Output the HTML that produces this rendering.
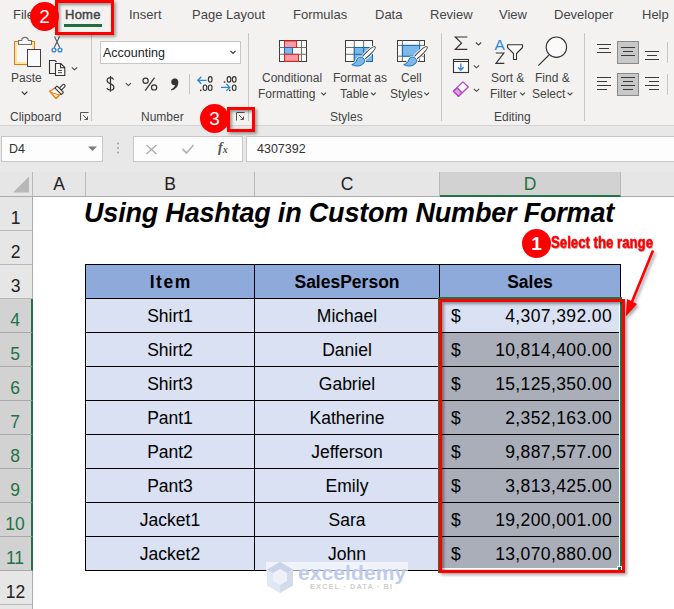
<!DOCTYPE html>
<html><head><meta charset="utf-8">
<style>
*{margin:0;padding:0;box-sizing:border-box}
html,body{width:674px;height:609px;overflow:hidden;background:#fff;font-family:"Liberation Sans",sans-serif}
.a{position:absolute;white-space:nowrap}
#ribbon{position:absolute;left:0;top:0;width:674px;height:126px;background:#f3f2f1;border-bottom:1px solid #d4d4d4}
.tab{position:absolute;top:7px;font-size:13px;color:#444;line-height:15px}
.lbl{position:absolute;font-size:12px;color:#444;line-height:14px}
.sep{position:absolute;width:1px;background:#c8c6c4}
#fbar{position:absolute;left:0;top:126px;width:674px;height:46px;background:#e8e8e8}
.box{position:absolute;top:10px;height:26px;background:#fdfdfd;border:1px solid #c6c6c6}
#colhdr{position:absolute;left:0;top:172px;width:674px;height:25px;background:#e6e6e6;border-bottom:1px solid #ababab}
.ch{position:absolute;top:0;height:24px;border-right:1px solid #b9b9b9;font-size:17.5px;color:#222;text-align:center;line-height:24px}
.rh{position:absolute;left:0;width:33px;height:34px;background:#e6e6e6;border-bottom:1px solid #b9b9b9;border-right:1px solid #ababab;font-size:17.5px;color:#222;text-align:center;line-height:42px;text-indent:-1px}
.rh.s{background:#d2d2d2;color:#217346;border-right:2px solid #217346;border-bottom-color:#a9a9a9}
.cell{position:absolute;height:34px;font-size:17.5px;text-align:center;color:#000;line-height:36px}
.badge{position:absolute;width:29px;height:29px;border-radius:50%;background:#ff0000;color:#fff;font-size:19px;text-align:center;line-height:29px}
.redbox{position:absolute;border:3px solid #ff0000;box-shadow:2px 2px 3px rgba(0,0,0,.35), inset 2px 2px 3px rgba(0,0,0,.38)}
</style></head><body>
<div id="ribbon">
  <div class="tab" style="left:13px">File</div>
  <div class="tab" style="left:65px;color:#444;-webkit-text-stroke:0.45px #444;letter-spacing:.25px">Home</div>
  <div class="tab" style="left:129px">Insert</div>
  <div class="tab" style="left:192px">Page Layout</div>
  <div class="tab" style="left:293px">Formulas</div>
  <div class="tab" style="left:375px">Data</div>
  <div class="tab" style="left:430px">Review</div>
  <div class="tab" style="left:499px">View</div>
  <div class="tab" style="left:554px">Developer</div>
  <div class="tab" style="left:642px">Help</div>
  <div class="a" style="left:64px;top:24px;width:38px;height:3px;background:#1e6e3f"></div>

  <div class="lbl" style="left:11px;top:71px">Paste</div>
  <div class="lbl" style="left:10px;top:110px">Clipboard</div>
  <div class="sep" style="left:91px;top:33px;height:88px"></div>
  <div class="lbl" style="left:141px;top:110px">Number</div>
  <div class="sep" style="left:248px;top:33px;height:88px"></div>
  <div class="lbl" style="left:262px;top:71px">Conditional</div>
  <div class="lbl" style="left:258px;top:87px">Formatting</div>
  <div class="lbl" style="left:333px;top:71px">Format as</div>
  <div class="lbl" style="left:340px;top:87px">Table</div>
  <div class="lbl" style="left:401px;top:71px">Cell</div>
  <div class="lbl" style="left:390px;top:87px">Styles</div>
  <div class="lbl" style="left:330px;top:110px">Styles</div>
  <div class="sep" style="left:441px;top:33px;height:88px"></div>
  <div class="lbl" style="left:491px;top:71px">Sort &amp;</div>
  <div class="lbl" style="left:490px;top:87px">Filter</div>
  <div class="lbl" style="left:535px;top:71px">Find &amp;</div>
  <div class="lbl" style="left:532px;top:87px">Select</div>
  <div class="lbl" style="left:494px;top:110px">Editing</div>
  <div class="sep" style="left:584px;top:33px;height:88px"></div>
  <div class="a" style="left:100px;top:41px;width:141px;height:23px;background:#fff;border:1px solid #c8c6c4"></div>
  <div class="a" style="left:103px;top:46px;font-size:12.5px;color:#222">Accounting</div>
<svg class="a" style="left:0;top:0" width="674" height="126" viewBox="0 0 674 126">
 <!-- Paste -->
 <rect x="14.5" y="41.5" width="20" height="23" fill="#fbe7a1" stroke="#e8790c" stroke-width="1"/>
 <rect x="17" y="44" width="15" height="18" fill="#f8f8f8"/>
 <path d="M18.5 44.5 H31.5 V40.5 H28.3 C28.3 36.3 21.7 36.3 21.7 40.5 H18.5 Z" fill="#f8f8f8" stroke="#6f6f6f" stroke-width="1.1"/>
 <rect x="27.5" y="49.5" width="13" height="17" fill="#fafafa" stroke="#3f3f3f" stroke-width="1"/>
 <path d="M21.8 91.6 L24.6 94.4 L27.4 91.6" fill="none" stroke="#333" stroke-width="1.15"/>
 <!-- scissors -->
 <path d="M54.5 36.5 L59.8 47.8 M59.5 36.5 L54.2 47.8" stroke="#555" stroke-width="1.1" fill="none"/>
 <circle cx="54" cy="50" r="1.9" fill="none" stroke="#2b88d8" stroke-width="1.3"/>
 <circle cx="60" cy="50" r="1.9" fill="none" stroke="#2b88d8" stroke-width="1.3"/>
 <!-- copy -->
 <path d="M55 73.5 H49.5 V60.5 H55 L56.5 62" fill="none" stroke="#333" stroke-width="1.1"/>
 <path d="M55.5 63.5 H60.8 L64.8 67.5 V75.5 H55.5 Z M60.5 63.5 V67.8 H64.8" fill="#f8f8f8" stroke="#333" stroke-width="1.1"/>
 <path d="M58 70.5 H62 M58 72.7 H62" stroke="#333" stroke-width="0.9"/>
 <path d="M71.8 67.3 L74.5 69.8 L77.2 67.3" fill="none" stroke="#444" stroke-width="1.1"/>
 <!-- format painter -->
 <path d="M55.8 87.6 L49.6 91.2 L56.1 98.5 L61.4 93.3 Z" fill="#fafafa" stroke="#e8790c" stroke-width="1.3" stroke-linejoin="round"/>
 <path d="M51.5 92.5 L59.3 95" stroke="#e8790c" stroke-width="1"/>
 <path d="M54 95.3 L57.8 95.6 L56 97.6 Z" fill="#f7d57a"/>
 <rect x="-2.6" y="-1.4" width="6.2" height="2.8" rx="1" transform="translate(62 87.4) rotate(-45)" fill="#fafafa" stroke="#333" stroke-width="1.1"/>
 <rect x="-4.6" y="-1.5" width="9.2" height="3" rx="0.6" transform="translate(59.2 90.2) rotate(45)" fill="#fafafa" stroke="#333" stroke-width="1.1"/>
 <!-- launchers -->
 <path d="M80.5 120.5 V112.5 H88.5 M83 115 L87.5 119.5 M84.5 119.5 H87.5 V116.5" fill="none" stroke="#555" stroke-width="1"/>
 <path d="M236.5 120.5 V112.5 H244.5 M239 115 L243.5 119.5 M240.5 119.5 H243.5 V116.5" fill="none" stroke="#555" stroke-width="1"/>
 <!-- accounting chevron -->
 <path d="M230.5 50.8 L233 53.3 L235.5 50.8" fill="none" stroke="#333" stroke-width="1.2"/>
 <!-- $ % , -->
 <path d="M110.5 76 V91.8 M113.6 79.6 C112.9 78.2 111.8 77.7 110.4 77.7 C108.3 77.7 107.1 78.9 107.1 80.6 C107.1 84.6 113.9 83.2 113.9 87.2 C113.9 89 112.5 90.1 110.4 90.1 C108.6 90.1 107.4 89.4 106.8 88" fill="none" stroke="#333" stroke-width="1.2"/>
 <path d="M125.8 83.2 L128.4 85.6 L131 83.2" fill="none" stroke="#444" stroke-width="1.1"/>
 <circle cx="145.6" cy="80.7" r="2.6" fill="none" stroke="#333" stroke-width="1.2"/><circle cx="154.1" cy="87.4" r="2.6" fill="none" stroke="#333" stroke-width="1.2"/><path d="M154.5 77.6 L145.2 90.7" stroke="#333" stroke-width="1.2"/>
 <path d="M174.5 78.5 C177.5 78.5 178.6 80.6 178.3 83 C178 86.5 175.5 89.5 171.5 90.5 L171 89.3 C173.3 88.3 174.8 86.8 175.2 85.3 C172.5 85.6 171.2 84 171.2 82 C171.2 79.8 172.8 78.5 174.5 78.5 Z" fill="#333"/>
 <rect x="189" y="74" width="1" height="20.5" fill="#c8c6c4"/>
 <!-- increase decimal -->
 <path d="M206.5 80.3 H197.8 M201.3 76.8 L197.8 80.3 L201.3 83.8" fill="none" stroke="#2b88d8" stroke-width="1.3"/>
 <g fill="none" stroke="#333" stroke-width="1.15">
  <ellipse cx="210.2" cy="79.4" rx="1.85" ry="2.75"/>
  <ellipse cx="205" cy="87.7" rx="1.85" ry="2.75"/>
  <ellipse cx="210.2" cy="87.7" rx="1.85" ry="2.75"/>
  <ellipse cx="229" cy="79.4" rx="1.85" ry="2.75"/>
  <ellipse cx="234.2" cy="79.4" rx="1.85" ry="2.75"/>
  <ellipse cx="234.2" cy="87.7" rx="1.85" ry="2.75"/>
 </g>
 <rect x="200" y="89.6" width="1.5" height="1.5" fill="#333"/>
 <rect x="223.8" y="81.3" width="1.5" height="1.5" fill="#333"/>
 <rect x="229" y="89.6" width="1.5" height="1.5" fill="#333"/>
 <path d="M221 87.4 H229.8 M226.3 83.9 L229.8 87.4 L226.3 90.9" fill="none" stroke="#2b88d8" stroke-width="1.3"/>
 <!-- Conditional formatting -->
 <rect x="279.5" y="40.5" width="27" height="21" fill="#fafafa" stroke="#3c3c3c" stroke-width="1"/>
 <path d="M279.5 47.5 H306.5 M279.5 54.3 H306.5 M301.5 40.5 V61.5" stroke="#6e6e6e" stroke-width="1"/>
 <rect x="284.5" y="41" width="12" height="6.5" fill="#ff9aa2" stroke="#e3221c" stroke-width="1"/>
 <rect x="284.5" y="47.5" width="8" height="6.8" fill="#7cb9e8" stroke="#0f6cbd" stroke-width="1"/>
 <rect x="284.5" y="54.3" width="14" height="7" fill="#ff9aa2" stroke="#e3221c" stroke-width="1"/>
 <!-- Format as table -->
 <rect x="345.5" y="40.5" width="27" height="21" fill="#fafafa" stroke="#3c3c3c" stroke-width="1"/>
 <path d="M345.5 47.5 H372.5 M345.5 54.3 H372.5 M354.3 40.5 V61.5 M363.6 40.5 V61.5" stroke="#6e6e6e" stroke-width="1"/>
 <rect x="354.3" y="47.5" width="18.2" height="14" fill="#7cb9e8" stroke="#0f6cbd" stroke-width="1"/>
 <path d="M363.6 47.5 V61.5 M354.3 54.3 H372.5" stroke="#0f6cbd" stroke-width="1"/>
 <g transform="translate(0 0)">
  <g transform="translate(368.3 53.3) rotate(-43)"><ellipse rx="9.3" ry="2.3" fill="#f3f2f1" stroke="#f3f2f1" stroke-width="2.5"/><ellipse rx="9.3" ry="2.1" fill="#fafafa" stroke="#3c3c3c" stroke-width="1"/></g>
  <path d="M363.8 58.8 C361.5 56.2 357.8 56.8 356.8 59.8 C356 62.2 354.7 63.7 351.8 64.6 C355.5 66.8 361.2 66.6 364 62.8 C365 61.3 364.9 59.9 363.8 58.8 Z" fill="#f3f2f1" stroke="#f3f2f1" stroke-width="2.5"/>
  <path d="M363.8 58.8 C361.5 56.2 357.8 56.8 356.8 59.8 C356 62.2 354.7 63.7 351.8 64.6 C355.5 66.8 361.2 66.6 364 62.8 C365 61.3 364.9 59.9 363.8 58.8 Z" fill="#7cb9e8" stroke="#0f6cbd" stroke-width="1"/>
 </g>
 <!-- cell styles -->
 <rect x="397.5" y="40.5" width="27" height="21" fill="#fafafa" stroke="#3c3c3c" stroke-width="1"/>
 <path d="M397.5 45.4 H424.5 M397.5 56.2 H424.5 M402.4 40.5 V61.5 M419.6 40.5 V61.5" stroke="#6e6e6e" stroke-width="1"/>
 <rect x="402.4" y="45.4" width="17.2" height="10.8" fill="#7cb9e8" stroke="#0f6cbd" stroke-width="1"/>
 <g transform="translate(52 0)">
  <g transform="translate(368.3 53.3) rotate(-43)"><ellipse rx="9.3" ry="2.3" fill="#f3f2f1" stroke="#f3f2f1" stroke-width="2.5"/><ellipse rx="9.3" ry="2.1" fill="#fafafa" stroke="#3c3c3c" stroke-width="1"/></g>
  <path d="M363.8 58.8 C361.5 56.2 357.8 56.8 356.8 59.8 C356 62.2 354.7 63.7 351.8 64.6 C355.5 66.8 361.2 66.6 364 62.8 C365 61.3 364.9 59.9 363.8 58.8 Z" fill="#f3f2f1" stroke="#f3f2f1" stroke-width="2.5"/>
  <path d="M363.8 58.8 C361.5 56.2 357.8 56.8 356.8 59.8 C356 62.2 354.7 63.7 351.8 64.6 C355.5 66.8 361.2 66.6 364 62.8 C365 61.3 364.9 59.9 363.8 58.8 Z" fill="#7cb9e8" stroke="#0f6cbd" stroke-width="1"/>
 </g>
 <!-- editing: sigma -->
 <path d="M467.3 37 H455.3 L461.5 43.2 L455.3 49.4 H467.3" fill="none" stroke="#333" stroke-width="1.2"/>
 <path d="M475.8 42.5 L478.5 45 L481.2 42.5" fill="none" stroke="#444" stroke-width="1.1"/>
 <!-- fill -->
 <rect x="453.5" y="59.5" width="15" height="13" fill="#fafafa" stroke="#333" stroke-width="1.1"/>
 <path d="M453.5 61.5 H468.5" stroke="#333" stroke-width="1"/>
 <path d="M460.8 63.5 V70 M458 67.3 L460.8 70.2 L463.6 67.3" fill="none" stroke="#2b88d8" stroke-width="1.3"/>
 <path d="M473.8 65.3 L476.5 67.8 L479.2 65.3" fill="none" stroke="#444" stroke-width="1.1"/>
 <!-- eraser -->
 <path d="M453.5 91.3 L462.9 81.9 L468.3 87 L458.5 96.3 Z" fill="#fafafa" stroke="#b146c2" stroke-width="1.3" stroke-linejoin="round"/>
 <path d="M453.5 91.3 L457.2 87.8 L462 92.7 L458.5 96.3 Z" fill="#d9a0e1" stroke="#b146c2" stroke-width="1.3" stroke-linejoin="round"/>
 <path d="M473.8 88.8 L476.5 91.3 L479.2 88.8" fill="none" stroke="#444" stroke-width="1.1"/>
 <!-- sort filter -->
 <text x="494.6" y="49.8" font-size="15.5" fill="#2b88d8" font-family="Liberation Sans">A</text>
 <path d="M495.8 53 H503.8 L496 63.3 H504.3" fill="none" stroke="#333" stroke-width="1.2"/>
 <path d="M507.5 44.8 H522.5 V47.5 L516.5 53.5 V59.5 H513.5 V53.5 L507.5 47.5 Z" fill="#fafafa" stroke="#333" stroke-width="1.1" stroke-linejoin="round"/>
 <!-- find -->
 <circle cx="556.4" cy="47.2" r="10.2" fill="#fafafa" stroke="#333" stroke-width="1.1"/>
 <path d="M549 55 L538.3 65.6" stroke="#333" stroke-width="1.1"/>
 <!-- alignment -->
 <rect x="617.5" y="41.5" width="21" height="22" fill="#c8c8c8" stroke="#8a8a8a" stroke-width="1"/>
 <rect x="617.5" y="73.5" width="21" height="22" fill="#c8c8c8" stroke="#8a8a8a" stroke-width="1"/>
 <g stroke="#3a3a3a" stroke-width="1">
  <path d="M597 44.5 H611 M599 48.5 H609 M597 52.5 H611"/>
  <path d="M621 47.5 H635 M623 51.5 H633 M621 55.5 H635"/>
  <path d="M645 51.5 H659 M647 55.5 H657 M645 59.5 H659"/>
  <path d="M597 77.5 H611 M597 81.5 H607 M597 85.5 H611 M597 89.5 H607"/>
  <path d="M621 77.5 H635 M623 81.5 H633 M621 85.5 H635 M623 89.5 H633"/>
  <path d="M645 77.5 H659 M649 81.5 H659 M645 85.5 H659 M649 89.5 H659"/>
 </g>
 <rect x="667" y="42" width="1" height="21" fill="#c8c6c4"/>
 <rect x="667" y="74" width="1" height="21" fill="#c8c6c4"/>
 <g fill="none" stroke="#444" stroke-width="1.1">
  <path d="M321.3 92.6 L323.7 95 L326.1 92.6"/>
  <path d="M371 92.6 L373.4 95 L375.8 92.6"/>
  <path d="M424.3 92.6 L426.7 95 L429.1 92.6"/>
  <path d="M520.2 92.6 L522.6 95 L525 92.6"/>
  <path d="M567.6 92.6 L570 95 L572.4 92.6"/>
 </g>
</svg>

</div>
<div id="fbar">
  <div class="box" style="left:1px;width:102px"></div>
  <div class="a" style="left:9px;top:16px;font-size:12.5px;color:#333">D4</div>
  <div class="box" style="left:133px;width:110px"></div>
  <div class="box" style="left:246px;width:440px"></div>
  <div class="a" style="left:257px;top:16px;font-size:12.5px;color:#333">4307392</div>
  <svg class="a" style="left:0;top:0" width="674" height="46">
   <path d="M88 20.5 L92.5 25 L97 20.5 Z" fill="#7a7a7a"/>
   <circle cx="118" cy="17.5" r="1" fill="#a0a0a0"/><circle cx="118" cy="22" r="1" fill="#a0a0a0"/><circle cx="118" cy="26.5" r="1" fill="#a0a0a0"/>
   <path d="M146.5 19 L156.5 28 M156.5 19 L146.5 28" stroke="#a8a8a8" stroke-width="1.2"/>
   <path d="M182.5 23 L186.5 27 L193.5 19" fill="none" stroke="#b4b4b4" stroke-width="1.8"/>
   <text x="218" y="26" font-family="Liberation Serif" font-style="italic" font-weight="bold" font-size="14" fill="#555">f</text>
   <text x="222.8" y="27" font-family="Liberation Serif" font-style="italic" font-weight="bold" font-size="10" fill="#555">x</text>
  </svg>
</div>
<div id="colhdr">
  <div class="ch" style="left:0;width:33px"><svg width="33" height="24" style="position:absolute;left:0;top:0"><path d="M29 4.5 V20.5 H13 Z" fill="#b8b8b8"/></svg></div>
  <div class="ch" style="left:33px;width:53px">A</div>
  <div class="ch" style="left:86px;width:169px">B</div>
  <div class="ch" style="left:255px;width:185px">C</div>
  <div class="ch" style="left:440px;width:181px;background:#d2d2d2;color:#217346;border-bottom:2px solid #217346;height:25px">D</div>
</div>
<div class="rh" style="top:197px">1</div>
<div class="rh" style="top:231px">2</div>
<div class="rh" style="top:265px">3</div>
<div class="rh s" style="top:299px">4</div>
<div class="rh s" style="top:333px">5</div>
<div class="rh s" style="top:367px">6</div>
<div class="rh s" style="top:401px">7</div>
<div class="rh s" style="top:435px">8</div>
<div class="rh s" style="top:469px">9</div>
<div class="rh s" style="top:503px">10</div>
<div class="rh s" style="top:537px">11</div>
<div class="rh" style="top:571px">12</div>
<div class="rh" style="top:605px">13</div>

<div class="a" style="left:84px;top:196px;font-size:27px;font-weight:bold;font-style:italic;line-height:34px;letter-spacing:-0.19px">Using Hashtag in Custom Number Format</div>

<!-- table -->
<div class="a" style="left:85px;top:264px;width:536px;height:307px;background:#d9e1f2;border:1px solid #000"></div>
<div class="a" style="left:86px;top:265px;width:534px;height:33px;background:#8eaadb"></div>
<div class="a" style="left:440px;top:333px;width:179px;height:235px;background:#a9aeb9"></div>
<div class="a" style="left:254px;top:264px;width:1px;height:307px;background:#000"></div>
<div class="a" style="left:439px;top:264px;width:1px;height:307px;background:#000"></div>
<div class="a" style="left:85px;top:298px;width:536px;height:1px;background:#000"></div>
<div class="a" style="left:85px;top:332px;width:536px;height:1px;background:#000"></div>
<div class="a" style="left:85px;top:366px;width:536px;height:1px;background:#000"></div>
<div class="a" style="left:85px;top:400px;width:536px;height:1px;background:#000"></div>
<div class="a" style="left:85px;top:434px;width:536px;height:1px;background:#000"></div>
<div class="a" style="left:85px;top:468px;width:536px;height:1px;background:#000"></div>
<div class="a" style="left:85px;top:502px;width:536px;height:1px;background:#000"></div>
<div class="a" style="left:85px;top:536px;width:536px;height:1px;background:#000"></div>
<div class="cell" style="left:86px;top:264px;width:168px;font-weight:bold;letter-spacing:1.5px;text-indent:1.5px">Item</div>
<div class="cell" style="left:255px;top:264px;width:184px;font-weight:bold">SalesPerson</div>
<div class="cell" style="left:440px;top:264px;width:180px;font-weight:bold">Sales</div>
<div class="cell" style="left:86px;top:298px;width:168px">Shirt1</div>
<div class="cell" style="left:255px;top:298px;width:184px">Michael</div>
<div class="cell" style="left:451px;top:298px;text-align:left">$</div>
<div class="cell" style="left:440px;top:298px;width:172px;text-align:right;letter-spacing:.38px">4,307,392.00</div>
<div class="cell" style="left:86px;top:332px;width:168px">Shirt2</div>
<div class="cell" style="left:255px;top:332px;width:184px">Daniel</div>
<div class="cell" style="left:451px;top:332px;text-align:left">$</div>
<div class="cell" style="left:440px;top:332px;width:172px;text-align:right;letter-spacing:.38px">10,814,400.00</div>
<div class="cell" style="left:86px;top:366px;width:168px">Shirt3</div>
<div class="cell" style="left:255px;top:366px;width:184px">Gabriel</div>
<div class="cell" style="left:451px;top:366px;text-align:left">$</div>
<div class="cell" style="left:440px;top:366px;width:172px;text-align:right;letter-spacing:.38px">15,125,350.00</div>
<div class="cell" style="left:86px;top:400px;width:168px">Pant1</div>
<div class="cell" style="left:255px;top:400px;width:184px">Katherine</div>
<div class="cell" style="left:451px;top:400px;text-align:left">$</div>
<div class="cell" style="left:440px;top:400px;width:172px;text-align:right;letter-spacing:.38px">2,352,163.00</div>
<div class="cell" style="left:86px;top:434px;width:168px">Pant2</div>
<div class="cell" style="left:255px;top:434px;width:184px">Jefferson</div>
<div class="cell" style="left:451px;top:434px;text-align:left">$</div>
<div class="cell" style="left:440px;top:434px;width:172px;text-align:right;letter-spacing:.38px">9,887,577.00</div>
<div class="cell" style="left:86px;top:468px;width:168px">Pant3</div>
<div class="cell" style="left:255px;top:468px;width:184px">Emily</div>
<div class="cell" style="left:451px;top:468px;text-align:left">$</div>
<div class="cell" style="left:440px;top:468px;width:172px;text-align:right;letter-spacing:.38px">3,813,425.00</div>
<div class="cell" style="left:86px;top:502px;width:168px">Jacket1</div>
<div class="cell" style="left:255px;top:502px;width:184px">Sara</div>
<div class="cell" style="left:451px;top:502px;text-align:left">$</div>
<div class="cell" style="left:440px;top:502px;width:172px;text-align:right;letter-spacing:.38px">19,200,001.00</div>
<div class="cell" style="left:86px;top:536px;width:168px">Jacket2</div>
<div class="cell" style="left:255px;top:536px;width:184px">John</div>
<div class="cell" style="left:451px;top:536px;text-align:left">$</div>
<div class="cell" style="left:440px;top:536px;width:172px;text-align:right;letter-spacing:.38px">13,070,880.00</div>
<!-- watermark -->
<div class="a" style="left:266px;top:562px;width:142px;height:31px;background:rgba(255,255,255,.6)"></div>
<svg class="a" style="left:264px;top:560px" width="32" height="36" viewBox="0 0 32 36">
 <path d="M16 2 L29 9.5 V25.5 L16 33 L3 25.5 V9.5 Z" fill="#dfe6f5"/>
 <path d="M16 2 L29 9.5 L16 17 L3 9.5 Z" fill="#c9d3ea"/>
 <path d="M16 17 L29 9.5 V25.5 L16 33 Z" fill="#d3dae8"/>
 <path d="M9 13 L16 9 L23 13 V21 L16 25 L9 21 Z" fill="#eef1f8"/>
</svg>
<div class="a" style="left:298px;top:561px;font-size:21px;font-weight:bold;color:#bfcbee;letter-spacing:.1px;line-height:24px">exceldemy</div>
<div class="a" style="left:310px;top:582px;font-size:7.5px;font-weight:bold;color:#cfcfcf;letter-spacing:1.05px;line-height:10px">EXCEL · DATA · BI</div>
<!-- selection -->
<div class="a" style="left:619px;top:299px;width:1px;height:270px;background:#fff"></div><div class="a" style="left:440px;top:568px;width:180px;height:1px;background:#fff"></div><div class="a" style="left:438px;top:297px;width:184px;height:276px;border:2px solid #217346"></div><div class="a" style="left:617px;top:566px;width:5px;height:5px;background:#217346;border:1px solid #fff"></div>
<div class="redbox" style="left:439px;top:299px;width:186px;height:274px"></div>
<!-- home rect -->
<div class="redbox" style="left:55px;top:0px;width:59px;height:35px"></div>
<div class="badge" style="left:30px;top:2px">2</div>
<div class="redbox" style="left:227px;top:107px;width:28px;height:25px"></div>
<div class="badge" style="left:200px;top:104px">3</div>
<div class="badge" style="left:522px;top:229px;font-weight:bold">1</div>
<div class="a" style="left:551px;top:233px;font-size:16.5px;font-weight:bold;color:#ff0000;transform:scaleX(.8);transform-origin:0 0;-webkit-text-stroke:.5px #ff0000;text-shadow:1px 1px 1px rgba(0,0,0,.3)">Select the range</div>
<svg class="a" style="left:0;top:0;filter:drop-shadow(2px 2px 1.5px rgba(0,0,0,.35))" width="674" height="609">
 <path d="M653 250.5 L631.5 303" stroke="#ff0000" stroke-width="2.6"/>
 <path d="M625.8 316.5 L627 299 L637 304 Z" fill="#ff0000"/>
</svg>
</body></html>
